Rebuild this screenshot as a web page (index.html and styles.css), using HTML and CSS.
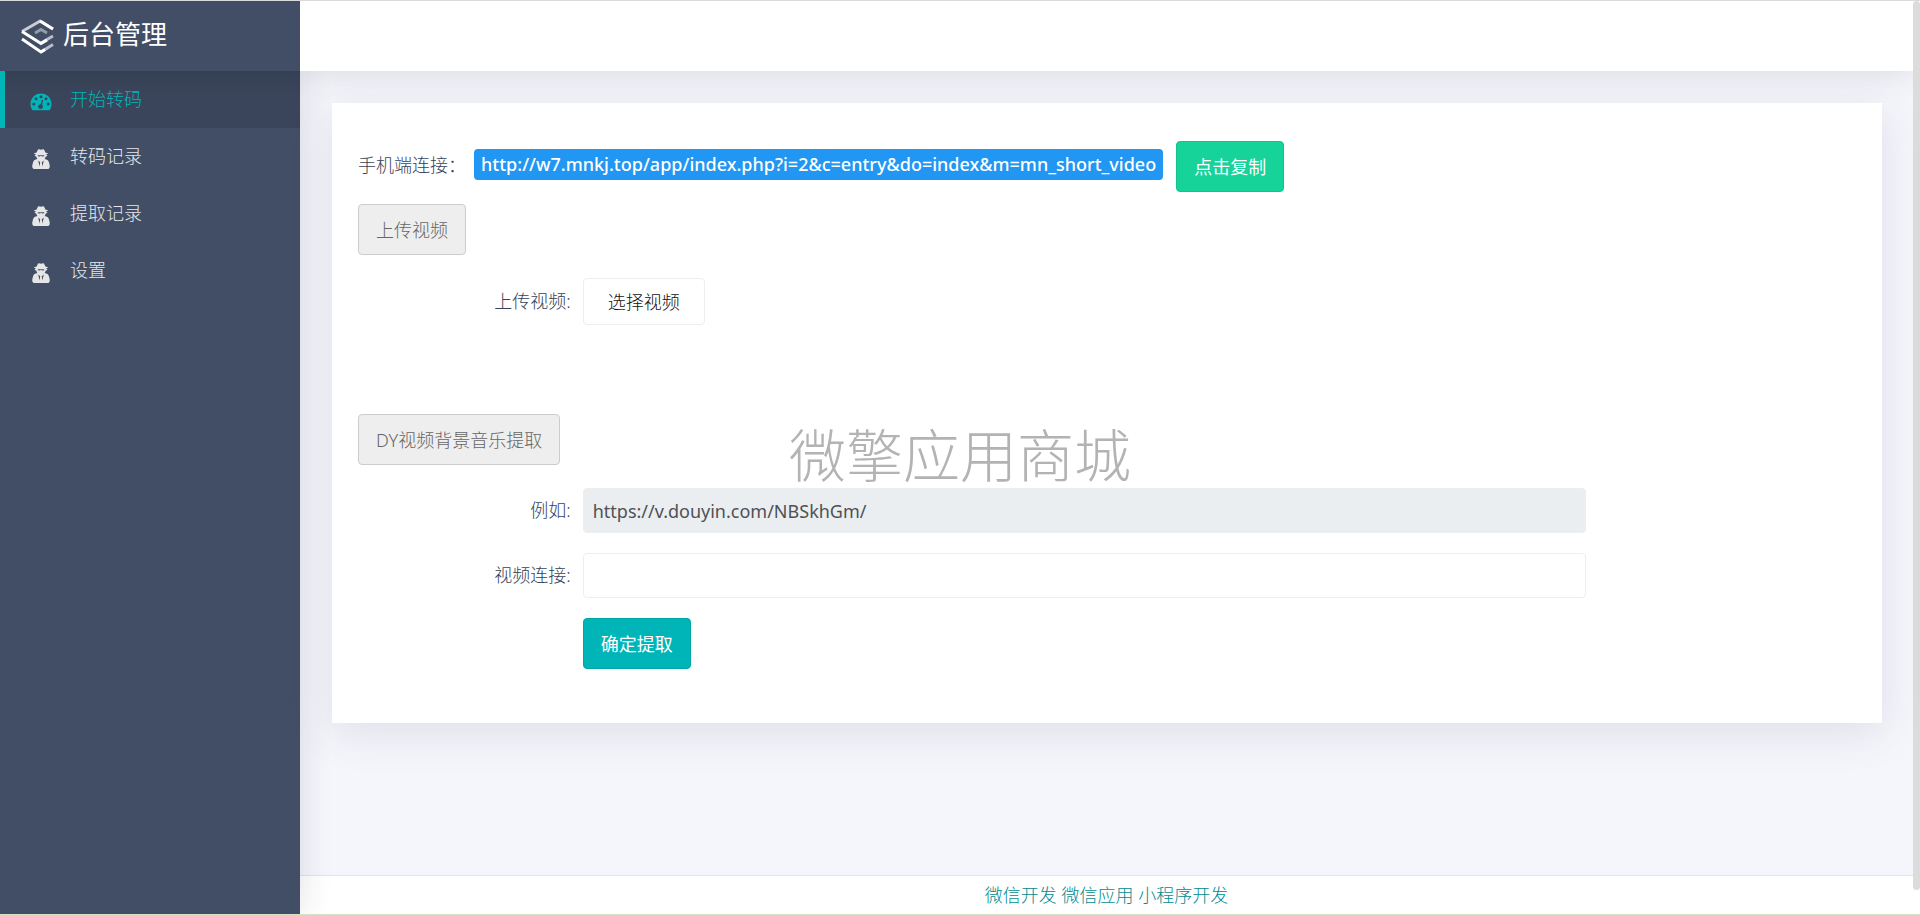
FILE: index.html
```html
<!DOCTYPE html>
<html lang="zh-CN">
<head>
<meta charset="utf-8">
<title>后台管理</title>
<link rel="stylesheet" href="styles.css">
</head>
<body>
<svg class="sprite" aria-hidden="true">
  <symbol id="agent" viewBox="0 0 18 20">
    <path fill-rule="evenodd" d="M6 .4Q7.500 0 9 .8Q10.500 0 12 .4L13.400 3.600L16.400 4.600L14 5.600L15.600 6.800L13.600 7.800C13.400 8.800 13.200 9.400 12.600 10C15 10.400 16.400 11.400 17 13.400C17.600 15.600 18 17 17.600 18.400Q17.200 20 15.400 20H2.600Q.8 20 .4 18.400C0 17 .4 15.600 1 13.400C1.600 11.400 3 10.400 5.400 10C4.800 9.400 4.600 8.800 4.400 7.800L2.400 6.800L4 5.600L1.600 4.600L4.600 3.600ZM5.800 6.200V7.200L8 7.600L9 6.800L10 7.600L12.200 7.200V6.200ZM6.200 11.400L7.600 17.400L8.200 13.200ZM11.800 11.400L10.400 17.400L9.800 13.200Z"/>
  </symbol>
</svg>
<div class="app">
  <aside class="sidebar">
    <div class="brand">
      <svg class="logo" viewBox="0 0 34 36" fill="none" stroke-width="3" aria-hidden="true">
        <path d="M20 2.500L32 10M32 17L20 24M32 25.500L20 33" stroke="#b9bec8"/>
        <path d="M14 14L20 10.500L26 14" stroke="#959dab"/>
        <path d="M1 12.500L20 1.500" stroke="#c9cdd4"/>
        <path d="M19 2L32 10M1 12.500L20 24.500L26 21M1 20L20 33L24 30.500" stroke="#fff"/>
      </svg>
      <span>后台管理</span>
    </div>
    <nav class="menu">
      <a class="menu-item active" href="#">
        <svg class="icon" viewBox="0 0 22 18" fill="currentColor" aria-hidden="true"><path fill-rule="evenodd" d="M11 .5C5 .5.500 5.200.500 11Q.500 14 2 16.700L3 17.300H19L20 16.700Q21.500 14 21.500 11C21.500 5.200 17 .5 11 .5ZM3.800 9.500A1.500 1.500 0 1 0 3.800 12.500A1.500 1.500 0 1 0 3.800 9.500ZM6 4.300A1.500 1.500 0 1 0 6 7.300A1.500 1.500 0 1 0 6 4.300ZM11 2.200A1.500 1.500 0 1 0 11 5.200A1.500 1.500 0 1 0 11 2.200ZM16 4.300A1.500 1.500 0 1 0 16 7.300A1.500 1.500 0 1 0 16 4.300ZM18.200 9.500A1.500 1.500 0 1 0 18.200 12.500A1.500 1.500 0 1 0 18.200 9.500ZM12 6.800L10.600 11.200A2.400 2.400 0 1 0 12 11.700L13.200 7.200Z"/></svg>
        <span>开始转码</span>
      </a>
      <a class="menu-item" href="#"><svg class="icon" fill="currentColor" aria-hidden="true"><use href="#agent"/></svg><span>转码记录</span></a>
      <a class="menu-item" href="#"><svg class="icon" fill="currentColor" aria-hidden="true"><use href="#agent"/></svg><span>提取记录</span></a>
      <a class="menu-item" href="#"><svg class="icon" fill="currentColor" aria-hidden="true"><use href="#agent"/></svg><span>设置</span></a>
    </nav>
  </aside>
  <div class="page">
    <header class="topbar"></header>
    <main class="content">
      <section class="card">
        <div class="link-row">
          <span>手机端连接：</span>
          <span class="badge">http://w7.mnkj.top/app/index.php?i=2&amp;c=entry&amp;do=index&amp;m=mn_short_video</span>
          <button class="btn btn-success" type="button">点击复制</button>
        </div>
        <button class="btn btn-muted" type="button">上传视频</button>
        <div class="field upload">
          <label for="pick">上传视频:</label>
          <div><button class="btn btn-pick" id="pick" type="button">选择视频</button></div>
        </div>
        <button class="btn btn-muted" type="button">DY视频背景音乐提取</button>
        <div class="field">
          <label for="sample">例如:</label>
          <input id="sample" type="text" value="https://v.douyin.com/NBSkhGm/" readonly>
        </div>
        <div class="field">
          <label for="link">视频连接:</label>
          <input id="link" type="text">
        </div>
        <div class="field">
          <div class="submit"><button class="btn btn-primary" type="submit">确定提取</button></div>
        </div>
      </section>
    </main>
    <footer class="footer"><a href="#">微信开发</a> <a href="#">微信应用</a> <a href="#">小程序开发</a></footer>
  </div>
  <div class="scroll"><div class="thumb"></div></div>
  <div class="watermark">微擎应用商城</div>
</div>
</body>
</html>
```
FILE: styles.css
```css
* { box-sizing: border-box; }
body {
  margin: 0;
  font: 18px/26px "Noto Sans", "Noto Sans CJK SC", sans-serif;
  font-weight: 300;
  color: #35425a;
}
.sprite { position: absolute; width: 0; height: 0; }
.app {
  position: relative;
  display: flex;
  height: 100vh;
  border-top: 1px solid #dadada;
  border-bottom: 1px solid #d7dfc4;
  overflow: hidden;
}
.sidebar {
  flex: 0 0 300px;
  z-index: 1;
  background: #414e66;
  box-shadow: 0 0 30px rgba(40, 40, 70, .15);
}
.brand {
  display: flex;
  align-items: center;
  gap: 8px;
  height: 70px;
  padding: 2px 0 0 21px;
  color: #fff;
  font-size: 26px;
  font-weight: 400;
}
.brand span { padding-bottom: 6px; }
.logo { width: 34px; height: 36px; }
.menu-item {
  display: flex;
  align-items: center;
  gap: 18px;
  height: 57px;
  padding-left: 30px;
  color: #e6e6e6;
  text-decoration: none;
}
.menu-item span { padding-bottom: 2px; }
.menu-item.active {
  padding-left: 25px;
  border-left: 5px solid #00b5b8;
  background: linear-gradient(#364053, #3a445b 24px);
  color: #00b5b8;
}
.icon { width: 22px; height: 20px; margin-top: 4px; }
.page {
  flex: 1;
  display: flex;
  flex-direction: column;
  min-width: 0;
  background: #f5f6fb;
}
.topbar {
  position: relative;
  z-index: 2;
  height: 70px;
  background: #fff;
  box-shadow: 0 0 35px rgba(50, 55, 70, .16);
  clip-path: inset(0 0 -40px 0);
}
.content { flex: 1; padding: 32px 31px 0 32px; }
.card {
  position: relative;
  z-index: 3;
  padding: 38px 26px 54px;
  background: #fff;
  box-shadow: 0 10px 40px rgba(62, 57, 107, .12);
}
.link-row {
  display: flex;
  align-items: center;
  margin-bottom: 12px;
}
.link-row > span:first-child { width: 116px; padding-bottom: 4px; }
.badge {
  margin: 0 13px 4px 0;
  padding: 2px 7px 3px;
  border-radius: 4px;
  background: #2196f3;
  color: #fff;
  font-weight: 500;
}
.btn {
  height: 51px;
  padding: 0 17px;
  border: 1px solid;
  border-radius: 4px;
  font: inherit;
}
.btn-success { border-color: #12c48b; background: #16d39a; color: #fff; font-weight: 400; }
.btn-muted { border-color: #ccc; background: #eee; color: #666; }
.btn-pick { height: 47px; padding: 0 24px; border-color: #eee; background: #fff; color: #111; }
.btn-primary { border-color: #00a5a8; background: #00b5b8; color: #fff; font-weight: 400; }
.field {
  display: grid;
  grid-template-columns: 15% 67%;
  align-items: center;
  margin: 0 0 20px;
}
.field label { padding: 0 12px 2px 0; text-align: right; }
.btn + .field { margin-top: 23px; }
.upload { margin-bottom: 89px; }
.submit { grid-column: 2; }
.field:last-child { margin-bottom: 0; }
.field input {
  width: 100%;
  height: 45px;
  padding: 0 9px;
  border: 1px solid #eee;
  border-radius: 4px;
  font: inherit;
  font-weight: 400;
  color: #4e5154;
}
.field input[readonly] { background: #eaeef1; }
.footer {
  height: 39px;
  padding-top: 6px;
  border-top: 1px solid #e1e4ea;
  background: #fff;
  text-align: center;
}
.footer a { color: #008c8f; text-decoration: none; }
.scroll { flex: 0 0 7px; background: #fff; }
.thumb { height: 889px; max-height: 100%; border-radius: 4px; background: #dcdcdc; }
.watermark {
  position: absolute;
  z-index: 4;
  top: 414px;
  left: 0;
  width: 100%;
  color: #b3b3b3;
  font-size: 57px;
  line-height: 80px;
  text-align: center;
  pointer-events: none;
}
```
